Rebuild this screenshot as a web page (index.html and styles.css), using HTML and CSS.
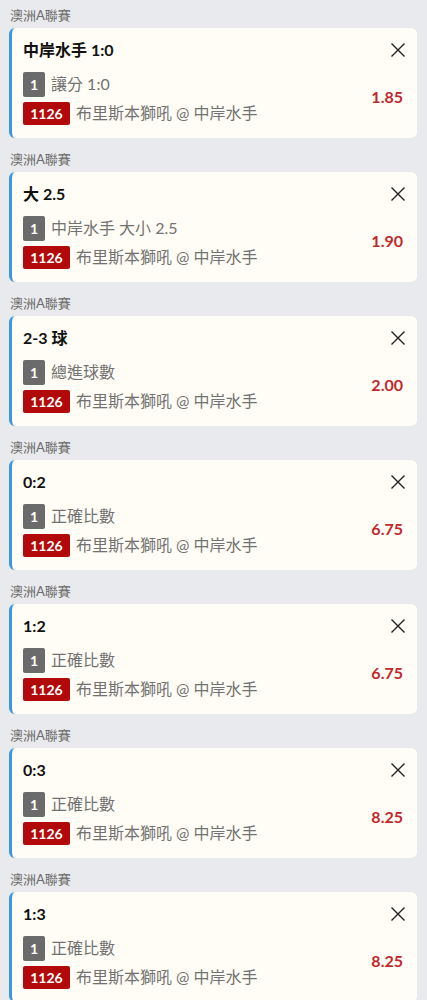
FILE: index.html
```html
<!DOCTYPE html>
<html lang="zh-Hant">
<head>
<meta charset="utf-8">
<link rel="stylesheet" href="styles.css">
</head>
<body>
<div class="list">
  <section class="group">
    <div class="league">澳洲A聯賽</div>
    <div class="card">
      <div class="info">
        <div class="title">中岸水手 1:0</div>
        <div class="row"><span class="badge gray">1</span><span class="txt">讓分 1:0</span></div>
        <div class="row"><span class="badge red">1126</span><span class="txt">布里斯本獅吼 @ 中岸水手</span></div>
      </div>
      <div class="side">
        <svg class="close" viewBox="0 0 16 16"><path d="M1.5 1.5 L14.5 14.5 M14.5 1.5 L1.5 14.5"/></svg>
        <div class="odds">1.85</div>
      </div>
    </div>
  </section>
  <section class="group">
    <div class="league">澳洲A聯賽</div>
    <div class="card">
      <div class="info">
        <div class="title">大 2.5</div>
        <div class="row"><span class="badge gray">1</span><span class="txt">中岸水手 大小 2.5</span></div>
        <div class="row"><span class="badge red">1126</span><span class="txt">布里斯本獅吼 @ 中岸水手</span></div>
      </div>
      <div class="side">
        <svg class="close" viewBox="0 0 16 16"><path d="M1.5 1.5 L14.5 14.5 M14.5 1.5 L1.5 14.5"/></svg>
        <div class="odds">1.90</div>
      </div>
    </div>
  </section>
  <section class="group">
    <div class="league">澳洲A聯賽</div>
    <div class="card">
      <div class="info">
        <div class="title">2-3 球</div>
        <div class="row"><span class="badge gray">1</span><span class="txt">總進球數</span></div>
        <div class="row"><span class="badge red">1126</span><span class="txt">布里斯本獅吼 @ 中岸水手</span></div>
      </div>
      <div class="side">
        <svg class="close" viewBox="0 0 16 16"><path d="M1.5 1.5 L14.5 14.5 M14.5 1.5 L1.5 14.5"/></svg>
        <div class="odds">2.00</div>
      </div>
    </div>
  </section>
  <section class="group">
    <div class="league">澳洲A聯賽</div>
    <div class="card">
      <div class="info">
        <div class="title">0:2</div>
        <div class="row"><span class="badge gray">1</span><span class="txt">正確比數</span></div>
        <div class="row"><span class="badge red">1126</span><span class="txt">布里斯本獅吼 @ 中岸水手</span></div>
      </div>
      <div class="side">
        <svg class="close" viewBox="0 0 16 16"><path d="M1.5 1.5 L14.5 14.5 M14.5 1.5 L1.5 14.5"/></svg>
        <div class="odds">6.75</div>
      </div>
    </div>
  </section>
  <section class="group">
    <div class="league">澳洲A聯賽</div>
    <div class="card">
      <div class="info">
        <div class="title">1:2</div>
        <div class="row"><span class="badge gray">1</span><span class="txt">正確比數</span></div>
        <div class="row"><span class="badge red">1126</span><span class="txt">布里斯本獅吼 @ 中岸水手</span></div>
      </div>
      <div class="side">
        <svg class="close" viewBox="0 0 16 16"><path d="M1.5 1.5 L14.5 14.5 M14.5 1.5 L1.5 14.5"/></svg>
        <div class="odds">6.75</div>
      </div>
    </div>
  </section>
  <section class="group">
    <div class="league">澳洲A聯賽</div>
    <div class="card">
      <div class="info">
        <div class="title">0:3</div>
        <div class="row"><span class="badge gray">1</span><span class="txt">正確比數</span></div>
        <div class="row"><span class="badge red">1126</span><span class="txt">布里斯本獅吼 @ 中岸水手</span></div>
      </div>
      <div class="side">
        <svg class="close" viewBox="0 0 16 16"><path d="M1.5 1.5 L14.5 14.5 M14.5 1.5 L1.5 14.5"/></svg>
        <div class="odds">8.25</div>
      </div>
    </div>
  </section>
  <section class="group">
    <div class="league">澳洲A聯賽</div>
    <div class="card">
      <div class="info">
        <div class="title">1:3</div>
        <div class="row"><span class="badge gray">1</span><span class="txt">正確比數</span></div>
        <div class="row"><span class="badge red">1126</span><span class="txt">布里斯本獅吼 @ 中岸水手</span></div>
      </div>
      <div class="side">
        <svg class="close" viewBox="0 0 16 16"><path d="M1.5 1.5 L14.5 14.5 M14.5 1.5 L1.5 14.5"/></svg>
        <div class="odds">8.25</div>
      </div>
    </div>
  </section>
</div>
</body>
</html>
```
FILE: styles.css
```css
html, body {
  margin: 0;
  padding: 0;
  background: #e9eaed;
}
body {
  font-family: Lato, "Noto Sans CJK TC", sans-serif;
  color: #111;
}
.group {
  margin-bottom: 6px;
}
.league {
  height: 28px;
  box-sizing: border-box;
  padding: 6px 0 4px 10px;
  font-size: 13px;
  line-height: 18px;
  color: #6b6b6b;
}
.card {
  display: flex;
  height: 110px;
  box-sizing: border-box;
  margin: 0 10px 0 9px;
  padding: 10px 11px 13px 11px;
  background: #fffdf5;
  border-left: 3px solid #3a98e0;
  border-radius: 6px;
}
.info {
  flex: 1;
  display: flex;
  flex-direction: column;
  gap: 5px;
}
.title {
  font-size: 16px;
  font-weight: 700;
  line-height: 24px;
  margin-bottom: 5px;
  color: #111;
}
.row {
  display: flex;
  align-items: center;
  gap: 6px;
  height: 24px;
}
.badge {
  display: flex;
  align-items: center;
  justify-content: center;
  border-radius: 2px;
  color: #fff;
  font-size: 14px;
  font-weight: 700;
  box-sizing: border-box;
}
.badge.gray {
  width: 22px;
  height: 25px;
  background: #6b6b6b;
}
.badge.red {
  width: 47px;
  height: 23px;
  background: #b20a0a;
}
.txt {
  font-size: 16px;
  color: #727272;
  line-height: 24px;
}
.side {
  display: flex;
  flex-direction: column;
  align-items: flex-end;
}
.close {
  width: 16px;
  height: 16px;
  margin-top: 4px;
  margin-bottom: 4px;
  fill: none;
  stroke: #222;
  stroke-width: 1.4;
}
.odds {
  flex: 1;
  display: flex;
  align-items: center;
  padding-top: 5px;
  margin-right: 3px;
  font-size: 16px;
  font-weight: 700;
  color: #c0282c;
}
```
